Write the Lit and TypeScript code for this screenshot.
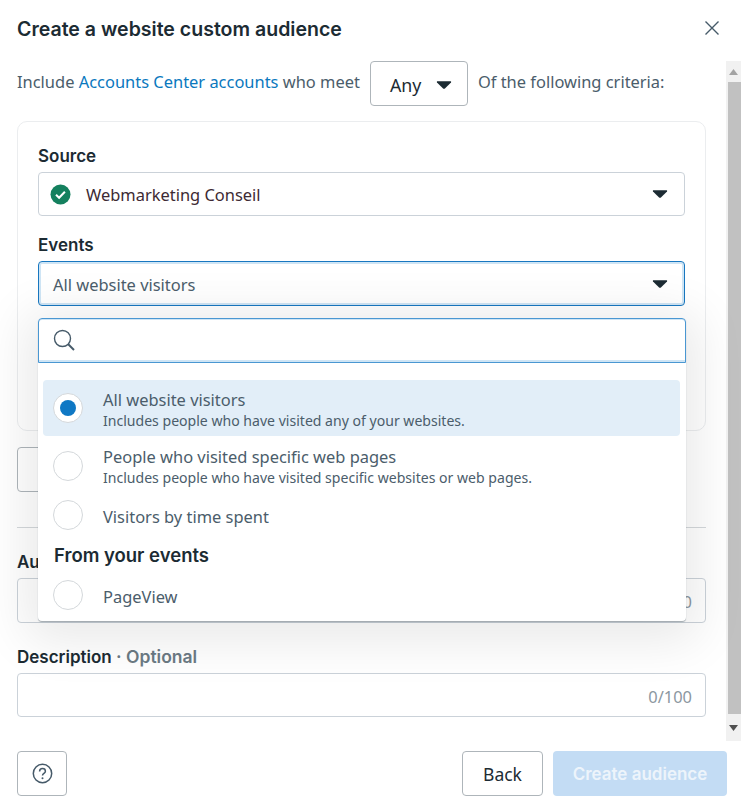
import { LitElement, html, css } from "lit";
import { customElement } from "lit/decorators.js";

const caret = html`<svg class="caret" width="16" height="10" viewBox="0 0 16 10"><path d="M1.6 1.2h12.8c.7 0 1 .7.6 1.2L9.2 8.3c-.7.7-1.7.7-2.4 0L1 2.4c-.4-.5-.1-1.2.6-1.2z" fill="#1c2b33"/></svg>`;

@customElement("app-root")
export class AppRoot extends LitElement {
  static styles = css`
    :host { display: block; position: relative; width: 741px; height: 810px; background: #fff; overflow: hidden;
      font-family: "Noto Sans", Roboto, sans-serif; font-size: 16.45px; color: #4b5d6b; }
    * { box-sizing: border-box; }
    .head { height: 61px; display: flex; justify-content: space-between; align-items: flex-start; padding: 18px 21px 0 17px; }
    .title { font-family: Inter, Roboto, sans-serif; font-size: 19.55px; line-height: 22px; font-weight: 600; color: #1c2b33; }
    .close { margin-top: 2px; display: block; }
    .mid { display: flex; height: 680px; }
    .content { width: 726px; flex: none; padding: 0 20px 0 17px; }
    .crit { height: 45px; display: flex; align-items: center; white-space: nowrap; }
    .crit .t { margin-top: -5px; }
    a { color: #0a78be; text-decoration: none; }
    .any { width: 98px; height: 45px; margin: 0 10px; border: 1px solid #aeb5ba; border-radius: 4px; display: flex; align-items: center;
      justify-content: space-between; padding: 2px 15px 0 19px; color: #1c2b33; font-size: 17.8px; }
    .card { margin-top: 15px; height: 310px; border: 1px solid #ebedef; border-radius: 10px; padding: 24px 20px 0; }
    .lab { font-family: Inter, Roboto, sans-serif; font-size: 17px; line-height: 20px; font-weight: 600; color: #1c2b33; }
    .sel { margin-top: 6px; height: 44px; border: 1px solid #cbd2d9; border-radius: 4px; display: flex; align-items: center;
      justify-content: space-between; padding: 0 16px 0 11px; }
    .sel .l { display: flex; align-items: center; gap: 15px; color: #3d2a33; }
    .ev { margin-top: 19px; }
    .sel.act { height: 45px; border-color: #1877c0; box-shadow: inset 0 0 0 2px #cfe5f5; padding-left: 14px; }
    .sel.act span { margin-top: 1px; }
    .ghost { margin-top: 16px; width: 60px; height: 45px; border: 1px solid #aeb5ba; border-radius: 4px; }
    .div { margin-top: 35px; height: 1px; background: #d4d8db; }
    .au { margin-top: 24px; }
    .inp { margin-top: 6px; height: 45px; border: 1px solid #cbd2d9; border-radius: 4px; display: flex; align-items: center;
      justify-content: flex-end; padding: 2px 13px 0 0; color: #8c979f; }
    .desc { margin-top: 24px; }
    .desc span { color: #6b7a84; font-size: 17.5px; }
    .inp.d { height: 44px; }
    .bar { width: 15px; flex: none; background: #f1f1f1; display: flex; flex-direction: column; align-items: flex-end; }
    .arrow { height: 21px; width: 15px; display: flex; align-items: center; justify-content: center; }
    .arrow.dn { height: 27px; }
    .thumb { flex: 1; width: 13px; background: #c1c1c1; }
    .foot { height: 69px; display: flex; align-items: flex-start; padding: 10px 14px 0 17px; }
    .btn { height: 45px; border: 1px solid #aeb5ba; border-radius: 4px; display: flex; align-items: center; justify-content: center; }
    .help { width: 50px; }
    .back { width: 81px; margin-left: auto; font-size: 17.5px; color: #1c2b33; }
    .create { width: 174px; margin-left: 10px; border: none; background: #c3dcf4; color: #edf4fb; font-family: Inter, Roboto, sans-serif; font-weight: 600; font-size: 17px; }
    .pop { position: absolute; left: 38px; top: 318px; width: 648px; height: 303px; background: #fff; border-radius: 4px;
      box-shadow: 0 1px 1px rgba(40,60,75,.4), 0 8px 50px 12px rgba(0,0,0,.09); }
    .search { height: 45px; border: 1px solid #4a97d2; border-radius: 4px 4px 0 0; box-shadow: inset 0 -2px 0 #cfe5f5, inset 0 1px 0 #cfe5f5; display: flex; align-items: center; padding-left: 14px; }
    .list { padding: 17px 6px 0 5px; }
    .opt { display: flex; align-items: center; gap: 20px; padding-left: 10px; border-radius: 4px; height: 56px; }
    .opt.sel1 { background: #e2eef8; }
    .opt.s { height: 30px; }
    .opt.s.time { margin-top: 6px; }
    .opt.s .ot { margin-top: 2px; }
    .opt2 { height: 58px; padding-top: 2px; }
    .tx { margin-top: 3px; }
    .opt2 .tx { margin-top: 1px; }
    .radio { width: 30px; height: 30px; flex: none; border-radius: 50%; border: 1px solid #d4d8db; background: #fff; display: flex; align-items: center; justify-content: center; }
    .opt2 .radio { margin-top: -1px; }
    .radio i { display: block; width: 16px; height: 16px; border-radius: 50%; background: #0f78c4; }
    .ot { line-height: 21px; white-space: nowrap; }
    .os { font-size: 14.07px; line-height: 20px; margin-top: 1px; white-space: nowrap; }
    .group { font-family: Inter, Roboto, sans-serif; font-size: 18.5px; line-height: 22px; font-weight: 600; color: #1c2b33; padding-left: 11px; margin: 14px 0 14px; }
  `;

  render() {
    return html`
      <div class="head">
        <div class="title">Create a website custom audience</div>
        <svg class="close" width="16" height="16" viewBox="0 0 16 16"><path d="M1.5 1.5l13 13M14.5 1.5l-13 13" stroke="#465a69" stroke-width="1.4" fill="none"/></svg>
      </div>
      <div class="mid">
        <div class="content">
          <div class="crit">
            <span class="t">Include <a>Accounts Center accounts</a> who meet</span>
            <div class="any">Any ${caret}</div>
            <span class="t">Of the following criteria:</span>
          </div>
          <div class="card">
            <div class="lab">Source</div>
            <div class="sel">
              <div class="l">
                <svg width="21" height="21" viewBox="0 0 21 21"><circle cx="10.5" cy="10.5" r="10" fill="#14805e"/><path d="M6 10.8l3.1 3 5.8-6" stroke="#fff" stroke-width="2" fill="none"/></svg>
                Webmarketing Conseil
              </div>
              ${caret}
            </div>
            <div class="lab ev">Events</div>
            <div class="sel act"><span>All website visitors</span>${caret}</div>
          </div>
          <div class="ghost"></div>
          <div class="div"></div>
          <div class="lab au">Audience name</div>
          <div class="inp">0/50</div>
          <div class="lab desc">Description <span>· Optional</span></div>
          <div class="inp d">0/100</div>
        </div>
        <div class="bar">
          <div class="arrow"><svg width="9" height="6" viewBox="0 0 9 6"><path d="M4.5 0L9 6H0z" fill="#a3a3a3"/></svg></div>
          <div class="thumb"></div>
          <div class="arrow dn"><svg width="9" height="6" viewBox="0 0 9 6"><path d="M0 0h9L4.5 6z" fill="#505050"/></svg></div>
        </div>
      </div>
      <div class="foot">
        <div class="btn help">
          <svg width="21" height="21" viewBox="0 0 21 21"><circle cx="10.5" cy="10.5" r="9.2" stroke="#465a69" stroke-width="1.5" fill="none"/><path d="M7.6 8.4c0-1.8 1.3-2.8 2.9-2.8s2.9 1 2.9 2.6c0 2.2-2.9 2.2-2.9 4.4" stroke="#465a69" stroke-width="1.5" fill="none"/><circle cx="10.5" cy="15.2" r="1" fill="#465a69"/></svg>
        </div>
        <div class="btn back">Back</div>
        <div class="btn create">Create audience</div>
      </div>
      <div class="pop">
        <div class="search">
          <svg width="23" height="23" viewBox="0 0 23 23"><circle cx="9.5" cy="9.5" r="8" stroke="#465a69" stroke-width="1.4" fill="none"/><path d="M15 15l6 6" stroke="#465a69" stroke-width="2" fill="none"/></svg>
        </div>
        <div class="list">
          <div class="opt sel1"><div class="radio"><i></i></div><div class="tx"><div class="ot">All website visitors</div><div class="os">Includes people who have visited any of your websites.</div></div></div>
          <div class="opt opt2"><div class="radio"></div><div class="tx"><div class="ot">People who visited specific web pages</div><div class="os">Includes people who have visited specific websites or web pages.</div></div></div>
          <div class="opt s time"><div class="radio"></div><div class="ot">Visitors by time spent</div></div>
          <div class="group">From your events</div>
          <div class="opt s"><div class="radio"></div><div class="ot">PageView</div></div>
        </div>
      </div>
    `;
  }
}
